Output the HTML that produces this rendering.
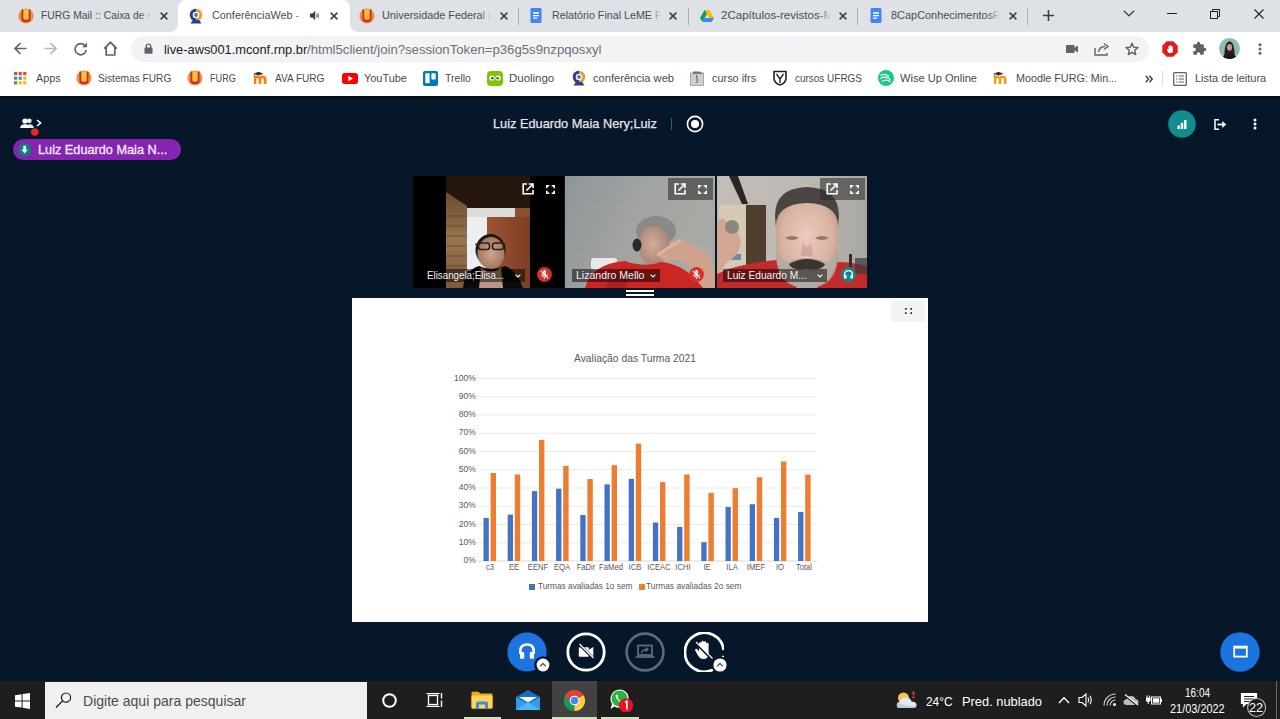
<!DOCTYPE html><html><head><meta charset="utf-8"><style>
*{box-sizing:border-box;margin:0;padding:0}
html,body{width:1280px;height:719px;overflow:hidden;background:#06172a;font-family:"Liberation Sans",sans-serif;position:relative}
.a{position:absolute}
.t{white-space:nowrap;transform-origin:0 0}
</style></head><body>
<div class="a" style="left:0px;top:0px;width:1280px;height:32px;background:#dee1e6"></div>
<div class="a" style="left:178px;top:0px;width:172px;height:32px;background:#fff;border-radius:8px 8px 0 0"></div>
<div class="a" style="left:170px;top:24px;width:8px;height:8px;background:#fff"></div>
<div class="a" style="left:162px;top:16px;width:16px;height:16px;background:#dee1e6;border-radius:0 0 8px 0"></div>
<div class="a" style="left:350px;top:24px;width:8px;height:8px;background:#fff"></div>
<div class="a" style="left:350px;top:16px;width:16px;height:16px;background:#dee1e6;border-radius:0 0 0 8px"></div>
<div class="a" style="left:518px;top:8px;width:1px;height:17px;background:#a9acb0"></div>
<div class="a" style="left:688px;top:8px;width:1px;height:17px;background:#a9acb0"></div>
<div class="a" style="left:857px;top:8px;width:1px;height:17px;background:#a9acb0"></div>
<div class="a" style="left:1027px;top:8px;width:1px;height:17px;background:#a9acb0"></div>
<div class="a t" style="left:41.00px;top:10.42px;font:400 11.5px/1 'Liberation Sans',sans-serif;color:#4a4d51;transform:scaleX(0.8998);">FURG Mail :: Caixa de e</div>
<div class="a" style="left:140px;top:5px;width:14px;height:22px;background:linear-gradient(90deg,rgba(222,225,230,0),#dee1e6 80%)"></div>
<div class="a" style="left:154px;top:5px;width:22px;height:22px;background:#dee1e6"></div>
<div class="a t" style="left:211.80px;top:10.42px;font:400 11.5px/1 'Liberation Sans',sans-serif;color:#4a4d51;transform:scaleX(0.9421);">ConferênciaWeb - L</div>
<div class="a" style="left:294px;top:5px;width:12px;height:22px;background:linear-gradient(90deg,rgba(255,255,255,0),#fff 80%)"></div>
<div class="a" style="left:306px;top:5px;width:22px;height:22px;background:#fff"></div>
<div class="a t" style="left:381.50px;top:10.42px;font:400 11.5px/1 'Liberation Sans',sans-serif;color:#4a4d51;transform:scaleX(0.9423);">Universidade Federal do</div>
<div class="a" style="left:480px;top:5px;width:14px;height:22px;background:linear-gradient(90deg,rgba(222,225,230,0),#dee1e6 80%)"></div>
<div class="a" style="left:494px;top:5px;width:22px;height:22px;background:#dee1e6"></div>
<div class="a t" style="left:551.50px;top:10.42px;font:400 11.5px/1 'Liberation Sans',sans-serif;color:#4a4d51;transform:scaleX(0.9313);">Relatório Final LeME PA</div>
<div class="a" style="left:650px;top:5px;width:14px;height:22px;background:linear-gradient(90deg,rgba(222,225,230,0),#dee1e6 80%)"></div>
<div class="a" style="left:664px;top:5px;width:22px;height:22px;background:#dee1e6"></div>
<div class="a t" style="left:721.30px;top:10.42px;font:400 11.5px/1 'Liberation Sans',sans-serif;color:#4a4d51;transform:scaleX(1.0033);">2Capítulos-revistos-Mar</div>
<div class="a" style="left:819px;top:5px;width:15px;height:22px;background:linear-gradient(90deg,rgba(222,225,230,0),#dee1e6 80%)"></div>
<div class="a" style="left:834px;top:5px;width:22px;height:22px;background:#dee1e6"></div>
<div class="a t" style="left:891.00px;top:10.42px;font:400 11.5px/1 'Liberation Sans',sans-serif;color:#4a4d51;transform:scaleX(0.9507);">8CapConhecimentosRev</div>
<div class="a" style="left:988px;top:5px;width:15px;height:22px;background:linear-gradient(90deg,rgba(222,225,230,0),#dee1e6 80%)"></div>
<div class="a" style="left:1003px;top:5px;width:22px;height:22px;background:#dee1e6"></div>
<svg class="a" style="left:160.2px;top:12.4px;" width="8" height="8" viewBox="0 0 8 8"><path d="M0.6 0.6L7.4 7.4M7.4 0.6L0.6 7.4" stroke="#3c4043" stroke-width="1.5"/></svg>
<svg class="a" style="left:330.2px;top:12.4px;" width="8" height="8" viewBox="0 0 8 8"><path d="M0.6 0.6L7.4 7.4M7.4 0.6L0.6 7.4" stroke="#3c4043" stroke-width="1.5"/></svg>
<svg class="a" style="left:500.2px;top:12.4px;" width="8" height="8" viewBox="0 0 8 8"><path d="M0.6 0.6L7.4 7.4M7.4 0.6L0.6 7.4" stroke="#3c4043" stroke-width="1.5"/></svg>
<svg class="a" style="left:669.2px;top:12.4px;" width="8" height="8" viewBox="0 0 8 8"><path d="M0.6 0.6L7.4 7.4M7.4 0.6L0.6 7.4" stroke="#3c4043" stroke-width="1.5"/></svg>
<svg class="a" style="left:839.2px;top:12.4px;" width="8" height="8" viewBox="0 0 8 8"><path d="M0.6 0.6L7.4 7.4M7.4 0.6L0.6 7.4" stroke="#3c4043" stroke-width="1.5"/></svg>
<svg class="a" style="left:1009.2px;top:12.4px;" width="8" height="8" viewBox="0 0 8 8"><path d="M0.6 0.6L7.4 7.4M7.4 0.6L0.6 7.4" stroke="#3c4043" stroke-width="1.5"/></svg>
<svg class="a" style="left:309px;top:10px;" width="12" height="11" viewBox="0 0 12 11"><path d="M1 3.6H3.4L6.2 0.8V10.2L3.4 7.4H1Z" fill="#3c4043"/><path d="M7.8 3.6Q8.6 5.5 7.8 7.4" stroke="#3c4043" stroke-width="1.1" fill="none"/><path d="M9.3 2.6Q10.5 5.5 9.3 8.4" stroke="#3c4043" stroke-width="0.9" fill="none" opacity="0.6"/></svg>
<svg class="a" style="left:18px;top:8px;" width="16" height="16" viewBox="0 0 16 16"><circle cx="8" cy="8" r="7.6" fill="#f0903c"/><path d="M3.6 1.5V11Q3.6 13.6 8 13.6Q12.4 13.6 12.4 11V1.5Z" fill="#f7c232"/><path d="M3.4 1.5V11.2Q3.4 14 8 14Q12.6 14 12.6 11.2V1.5H10.7V10.6Q10.7 11.8 8 11.8Q5.3 11.8 5.3 10.6V1.5Z" fill="#c8283e"/></svg>
<svg class="a" style="left:359px;top:8px;" width="16" height="16" viewBox="0 0 16 16"><circle cx="8" cy="8" r="7.6" fill="#f0903c"/><path d="M3.6 1.5V11Q3.6 13.6 8 13.6Q12.4 13.6 12.4 11V1.5Z" fill="#f7c232"/><path d="M3.4 1.5V11.2Q3.4 14 8 14Q12.6 14 12.6 11.2V1.5H10.7V10.6Q10.7 11.8 8 11.8Q5.3 11.8 5.3 10.6V1.5Z" fill="#c8283e"/></svg>
<svg class="a" style="left:188px;top:8px;" width="16" height="16" viewBox="0 0 16 16"><circle cx="8" cy="7" r="6.2" fill="#f39a2b"/><path d="M1.8 7A6.2 6.2 0 0 1 8 0.8V13.2A6.2 6.2 0 0 1 1.8 7Z" fill="#243f8f"/><circle cx="8" cy="7" r="3.3" fill="#fff"/><circle cx="8" cy="7" r="1.9" fill="#4a6fc6"/><path d="M2.5 15.5L4.8 12H11.2L13.5 15.5Z" fill="#243f8f"/></svg>
<svg class="a" style="left:529px;top:8px;" width="14" height="15" viewBox="0 0 14 15"><rect x="1.5" y="0" width="11" height="15" rx="1.5" fill="#4285f4"/><path d="M4 5H10M4 7.6H10M4 10.2H8" stroke="#fff" stroke-width="1.3"/></svg>
<svg class="a" style="left:869px;top:8px;" width="14" height="15" viewBox="0 0 14 15"><rect x="1.5" y="0" width="11" height="15" rx="1.5" fill="#4285f4"/><path d="M4 5H10M4 7.6H10M4 10.2H8" stroke="#fff" stroke-width="1.3"/></svg>
<svg class="a" style="left:700px;top:10px;" width="14" height="12" viewBox="0 0 14 12"><path d="M4.6 0H9.4L14 8H9.2Z" fill="#fbbc04"/><path d="M4.6 0L0 8L2.4 12L7 4Z" fill="#0f9d58"/><path d="M2.4 12H11.6L14 8H4.8Z" fill="#4285f4"/><path d="M7 4L9.4 0L14 8H9.2Z" fill="#ea4335" opacity="0"/></svg>
<svg class="a" style="left:1043px;top:10px;" width="11" height="11" viewBox="0 0 11 11"><path d="M5.5 0V11M0 5.5H11" stroke="#3c4043" stroke-width="1.6"/></svg>
<svg class="a" style="left:1123px;top:9.5px;" width="12" height="7" viewBox="0 0 12 7"><path d="M0.8 0.8L6 5.8L11.2 0.8" stroke="#3c4043" stroke-width="1.2" fill="none"/></svg>
<div class="a" style="left:1167px;top:13px;width:10px;height:1px;background:#202124"></div>
<svg class="a" style="left:1210px;top:8.5px;" width="10" height="10" viewBox="0 0 10 10"><path d="M2.5 2.5V0.5H9.5V7.5H7.5" stroke="#202124" stroke-width="1" fill="none"/><rect x="0.5" y="2.5" width="7" height="7" stroke="#202124" stroke-width="1" fill="none"/></svg>
<svg class="a" style="left:1253.5px;top:8.5px;" width="10" height="10" viewBox="0 0 10 10"><path d="M0.5 0.5L9.5 9.5M9.5 0.5L0.5 9.5" stroke="#202124" stroke-width="1.1"/></svg>
<div class="a" style="left:0px;top:32px;width:1280px;height:32px;background:#fff"></div>
<div class="a" style="left:131px;top:36px;width:1018px;height:26px;background:#f1f3f4;border-radius:13px"></div>
<svg class="a" style="left:14px;top:42px;" width="13" height="13" viewBox="0 0 13 13"><path d="M12.5 6.5H1.5M6.5 1L1 6.5L6.5 12" stroke="#5f6368" stroke-width="1.7" fill="none"/></svg>
<svg class="a" style="left:44px;top:42px;" width="13" height="13" viewBox="0 0 13 13"><path d="M0.5 6.5H11.5M6.5 1L12 6.5L6.5 12" stroke="#b4b8bc" stroke-width="1.7" fill="none"/></svg>
<svg class="a" style="left:74px;top:42px;" width="14" height="14" viewBox="0 0 14 14"><path d="M11.5 4.2A5.6 5.6 0 1 0 12.3 8" stroke="#5f6368" stroke-width="1.7" fill="none"/><path d="M8.2 5.2H13V0.4Z" fill="#5f6368"/></svg>
<svg class="a" style="left:103px;top:41px;" width="15" height="15" viewBox="0 0 15 15"><path d="M1.2 7.6L7.5 1.3L13.8 7.6M3.2 6V14H11.8V6" stroke="#5f6368" stroke-width="1.7" fill="none" stroke-linejoin="miter"/></svg>
<svg class="a" style="left:144px;top:43px;" width="9" height="11" viewBox="0 0 9 11"><path d="M2.3 5V3.3A2.2 2.2 0 0 1 6.7 3.3V5" stroke="#5f6368" stroke-width="1.4" fill="none"/><rect x="0.5" y="4.6" width="8" height="6.2" rx="0.8" fill="#5f6368"/></svg>
<div class="a t" style="left:163.50px;top:42.65px;font:400 13px/1 'Liberation Sans',sans-serif;color:#202124;transform:scaleX(0.9860);">live-aws001.mconf.rnp.br</div>
<div class="a t" style="left:307.00px;top:42.65px;font:400 13px/1 'Liberation Sans',sans-serif;color:#6c7075;transform:scaleX(1.0125);">/html5client/join?sessionToken=p36g5s9nzpqosxyl</div>
<svg class="a" style="left:1066px;top:45px;" width="12" height="8" viewBox="0 0 12 8"><rect x="0" y="0" width="8.5" height="8" rx="0.6" fill="#5f6368"/><path d="M8 3L12 0.5V7.5L8 5Z" fill="#5f6368"/></svg>
<svg class="a" style="left:1094px;top:42px;" width="16" height="14" viewBox="0 0 16 14"><path d="M1 6V13H13V11" stroke="#5f6368" stroke-width="1.4" fill="none"/><path d="M4.5 10Q5.5 4.5 11 4.5" stroke="#5f6368" stroke-width="1.4" fill="none"/><path d="M10 1.5L14 4.5L10 7.5" stroke="#5f6368" stroke-width="1.4" fill="none"/></svg>
<svg class="a" style="left:1125px;top:42px;" width="14" height="14" viewBox="0 0 14 14"><path d="M7 1.2L8.7 5.2L13 5.5L9.7 8.3L10.7 12.6L7 10.3L3.3 12.6L4.3 8.3L1 5.5L5.3 5.2Z" stroke="#5f6368" stroke-width="1.4" fill="none" stroke-linejoin="round"/></svg>
<svg class="a" style="left:1162px;top:41px;" width="16" height="16" viewBox="0 0 16 16"><path d="M4.7 0.3H11.3L15.7 4.7V11.3L11.3 15.7H4.7L0.3 11.3V4.7Z" fill="#e01b1b"/><path transform="translate(8 8) scale(0.82) translate(-7.8 -7.6)" d="M5.6 12.6L4.2 8.6Q3.9 7.6 4.7 7.4Q5.3 7.3 5.6 8L6 8.8V4.4Q6 3.7 6.7 3.7Q7.3 3.7 7.3 4.4V3.6Q7.3 2.9 8 2.9Q8.7 2.9 8.7 3.6V4.1Q8.7 3.4 9.4 3.4Q10.1 3.4 10.1 4.1V5.1Q10.1 4.5 10.7 4.5Q11.4 4.5 11.4 5.2V10Q11.4 12.6 9.2 12.6Z" fill="#fff"/></svg>
<svg class="a" style="left:1192px;top:41px;" width="15" height="15" viewBox="0 0 24 24"><path d="M20.5 11H19V7c0-1.1-.9-2-2-2h-4V3.5C13 2.12 11.88 1 10.5 1S8 2.12 8 3.5V5H4c-1.1 0-1.99.9-1.99 2v3.8H3.5c1.49 0 2.7 1.21 2.7 2.7s-1.21 2.7-2.7 2.7H2V20c0 1.1.9 2 2 2h3.8v-1.5c0-1.49 1.21-2.7 2.7-2.7 1.49 0 2.7 1.21 2.7 2.7V22H17c1.1 0 2-.9 2-2v-4h1.5c1.38 0 2.5-1.12 2.5-2.5S21.88 11 20.5 11z" fill="#5f6368"/></svg>
<svg class="a" style="left:1219px;top:38px;" width="21" height="21" viewBox="0 0 21 21"><defs><clipPath id="av"><circle cx="10.5" cy="10.5" r="10.5"/></clipPath></defs><g clip-path="url(#av)"><rect width="21" height="21" fill="#8fbcb8"/><path d="M5.5 21Q5 13 6.5 8Q7.5 3.5 10.5 3.5Q13.5 3.5 14.5 8Q16 13 15.5 21Z" fill="#2c1f1c"/><ellipse cx="10.5" cy="9.3" rx="2.6" ry="3.4" fill="#c89a86"/><path d="M3 21Q4.5 15.5 10.5 15.5Q16.5 15.5 18 21Z" fill="#1c1a1c"/></g></svg>
<svg class="a" style="left:1258px;top:43px;" width="4" height="12" viewBox="0 0 4 12"><circle cx="2" cy="1.7" r="1.5" fill="#5f6368"/><circle cx="2" cy="6" r="1.5" fill="#5f6368"/><circle cx="2" cy="10.3" r="1.5" fill="#5f6368"/></svg>
<div class="a" style="left:0px;top:64px;width:1280px;height:32px;background:#fff"></div>
<div class="a t" style="left:35.50px;top:73.32px;font:400 11.5px/1 'Liberation Sans',sans-serif;color:#474a4f;transform:scaleX(0.9423);">Apps</div>
<div class="a t" style="left:98.30px;top:73.32px;font:400 11.5px/1 'Liberation Sans',sans-serif;color:#474a4f;transform:scaleX(0.8824);">Sistemas FURG</div>
<div class="a t" style="left:210.10px;top:73.32px;font:400 11.5px/1 'Liberation Sans',sans-serif;color:#474a4f;transform:scaleX(0.7919);">FURG</div>
<div class="a t" style="left:274.90px;top:73.32px;font:400 11.5px/1 'Liberation Sans',sans-serif;color:#474a4f;transform:scaleX(0.8760);">AVA FURG</div>
<div class="a t" style="left:364.20px;top:73.32px;font:400 11.5px/1 'Liberation Sans',sans-serif;color:#474a4f;transform:scaleX(0.9471);">YouTube</div>
<div class="a t" style="left:445.10px;top:73.32px;font:400 11.5px/1 'Liberation Sans',sans-serif;color:#474a4f;transform:scaleX(0.9143);">Trello</div>
<div class="a t" style="left:509.30px;top:73.32px;font:400 11.5px/1 'Liberation Sans',sans-serif;color:#474a4f;transform:scaleX(0.9957);">Duolingo</div>
<div class="a t" style="left:592.50px;top:73.32px;font:400 11.5px/1 'Liberation Sans',sans-serif;color:#474a4f;transform:scaleX(0.9672);">conferência web</div>
<div class="a t" style="left:711.90px;top:73.32px;font:400 11.5px/1 'Liberation Sans',sans-serif;color:#474a4f;transform:scaleX(0.9476);">curso ifrs</div>
<div class="a t" style="left:794.50px;top:73.32px;font:400 11.5px/1 'Liberation Sans',sans-serif;color:#474a4f;transform:scaleX(0.8666);">cursos UFRGS</div>
<div class="a t" style="left:899.50px;top:73.32px;font:400 11.5px/1 'Liberation Sans',sans-serif;color:#474a4f;transform:scaleX(0.9639);">Wise Up Online</div>
<div class="a t" style="left:1015.90px;top:73.32px;font:400 11.5px/1 'Liberation Sans',sans-serif;color:#474a4f;transform:scaleX(0.9361);">Moodle FURG: Min...</div>
<div class="a t" style="left:1194.90px;top:73.32px;font:400 11.5px/1 'Liberation Sans',sans-serif;color:#474a4f;transform:scaleX(0.9506);">Lista de leitura</div>
<svg class="a" style="left:14px;top:72px;" width="13" height="13" viewBox="0 0 13 13"><rect x="0.0" y="0.0" width="3.2" height="3.2" fill="#ea4335"/><rect x="4.6" y="0.0" width="3.2" height="3.2" fill="#ea4335"/><rect x="9.2" y="0.0" width="3.2" height="3.2" fill="#ea4335"/><rect x="0.0" y="4.6" width="3.2" height="3.2" fill="#34a853"/><rect x="4.6" y="4.6" width="3.2" height="3.2" fill="#4285f4"/><rect x="9.2" y="4.6" width="3.2" height="3.2" fill="#fbbc04"/><rect x="0.0" y="9.2" width="3.2" height="3.2" fill="#34a853"/><rect x="4.6" y="9.2" width="3.2" height="3.2" fill="#fbbc04"/><rect x="9.2" y="9.2" width="3.2" height="3.2" fill="#fbbc04"/></svg>
<svg class="a" style="left:76px;top:70px;" width="16" height="16" viewBox="0 0 16 16"><circle cx="8" cy="8" r="7.6" fill="#f0903c"/><path d="M3.6 1.5V11Q3.6 13.6 8 13.6Q12.4 13.6 12.4 11V1.5Z" fill="#f7c232"/><path d="M3.4 1.5V11.2Q3.4 14 8 14Q12.6 14 12.6 11.2V1.5H10.7V10.6Q10.7 11.8 8 11.8Q5.3 11.8 5.3 10.6V1.5Z" fill="#c8283e"/></svg>
<svg class="a" style="left:187px;top:70px;" width="16" height="16" viewBox="0 0 16 16"><circle cx="8" cy="8" r="7.6" fill="#f0903c"/><path d="M3.6 1.5V11Q3.6 13.6 8 13.6Q12.4 13.6 12.4 11V1.5Z" fill="#f7c232"/><path d="M3.4 1.5V11.2Q3.4 14 8 14Q12.6 14 12.6 11.2V1.5H10.7V10.6Q10.7 11.8 8 11.8Q5.3 11.8 5.3 10.6V1.5Z" fill="#c8283e"/></svg>
<svg class="a" style="left:253px;top:71px;" width="15" height="14" viewBox="0 0 15 14"><path d="M1 6.5Q1 4.5 3.5 4.5Q5.5 4.5 6.3 5.7Q7.2 4.5 9.3 4.5Q13.5 4.5 13.5 8V13H10.8V8.5Q10.8 7 9.6 7Q8.3 7 8.3 8.5V13H5.6V8.5Q5.6 7 4.4 7Q3.4 7 3.4 8.5V13H1Z" fill="#f98012"/><path d="M0.5 2.8L5.5 0.8L10.5 2.8L5.5 4.6Z" fill="#333"/><path d="M1.2 3V6" stroke="#333" stroke-width="0.7"/></svg>
<svg class="a" style="left:993px;top:71px;" width="15" height="14" viewBox="0 0 15 14"><path d="M1 6.5Q1 4.5 3.5 4.5Q5.5 4.5 6.3 5.7Q7.2 4.5 9.3 4.5Q13.5 4.5 13.5 8V13H10.8V8.5Q10.8 7 9.6 7Q8.3 7 8.3 8.5V13H5.6V8.5Q5.6 7 4.4 7Q3.4 7 3.4 8.5V13H1Z" fill="#e8a022"/><path d="M0.5 2.8L5.5 0.8L10.5 2.8L5.5 4.6Z" fill="#333"/><path d="M1.2 3V6" stroke="#333" stroke-width="0.7"/></svg>
<svg class="a" style="left:341.5px;top:73px;" width="16" height="11" viewBox="0 0 16 11"><rect width="16" height="11" rx="2.8" fill="#f00"/><path d="M6.3 2.8L11 5.5L6.3 8.2Z" fill="#fff"/></svg>
<svg class="a" style="left:422.5px;top:71px;" width="15" height="15" viewBox="0 0 15 15"><rect width="15" height="15" rx="2" fill="#0079bf"/><rect x="2.3" y="2.3" width="4.3" height="10" rx="0.7" fill="#fff"/><rect x="8.4" y="2.3" width="4.3" height="6.2" rx="0.7" fill="#fff"/></svg>
<svg class="a" style="left:487px;top:71px;" width="16" height="15" viewBox="0 0 16 15"><rect width="16" height="15" rx="4" fill="#78c800"/><circle cx="5" cy="7" r="2.6" fill="#fff"/><circle cx="11" cy="7" r="2.6" fill="#fff"/><circle cx="5.4" cy="7.3" r="1.3" fill="#4b4b4b"/><circle cx="10.6" cy="7.3" r="1.3" fill="#4b4b4b"/><path d="M6.5 11.5H9.5L8 13Z" fill="#f5a500"/></svg>
<svg class="a" style="left:571px;top:70px;" width="16" height="16" viewBox="0 0 16 16"><circle cx="8" cy="7" r="6.2" fill="#f39a2b"/><path d="M1.8 7A6.2 6.2 0 0 1 8 0.8V13.2A6.2 6.2 0 0 1 1.8 7Z" fill="#243f8f"/><circle cx="8" cy="7" r="3.3" fill="#fff"/><circle cx="8" cy="7" r="1.9" fill="#4a6fc6"/><path d="M2.5 15.5L4.8 12H11.2L13.5 15.5Z" fill="#243f8f"/></svg>
<svg class="a" style="left:690px;top:70px;" width="15" height="16" viewBox="0 0 15 16"><rect x="0.5" y="3" width="13" height="12.5" fill="#cfcfcf" stroke="#9a9a9a" stroke-width="0.8"/><path d="M3 1.5L10 1.5L13.5 4L3 4Z" fill="#777"/><path d="M6.5 5L7.5 11L6 13" stroke="#555" stroke-width="1" fill="none"/></svg>
<svg class="a" style="left:773px;top:70px;" width="14" height="16" viewBox="0 0 14 16"><path d="M1 1.5H13V8Q13 13 7 15Q1 13 1 8Z" stroke="#222" stroke-width="1.6" fill="none"/><path d="M3.5 4L7 9L10.5 4M7 9V13" stroke="#222" stroke-width="1.4" fill="none"/></svg>
<svg class="a" style="left:878px;top:70px;" width="16" height="16" viewBox="0 0 16 16"><circle cx="8" cy="8" r="8" fill="#18c98a"/><path d="M2.5 5.5Q6 3 11 6.5M2.5 8.5Q6.5 5.5 12.5 9.5M4 11.5Q8 8.5 13 12" stroke="#fff" stroke-width="1.2" fill="none"/></svg>
<svg class="a" style="left:1144.5px;top:74.5px;" width="8" height="8" viewBox="0 0 8 8"><path d="M0.8 0.8L3.6 4L0.8 7.2M4.4 0.8L7.2 4L4.4 7.2" stroke="#3c4043" stroke-width="1.4" fill="none"/></svg>
<div class="a" style="left:1162px;top:71px;width:1px;height:15px;background:#dadce0"></div>
<svg class="a" style="left:1173px;top:72px;" width="14" height="14" viewBox="0 0 14 14"><rect x="0.7" y="0.7" width="12.6" height="12.6" rx="1" stroke="#5f6368" stroke-width="1.3" fill="none"/><path d="M3 4H4.3M3 7H4.3M3 10H4.3M5.7 4H11M5.7 7H11M5.7 10H11" stroke="#5f6368" stroke-width="1.2"/></svg>
<div class="a" style="left:0px;top:96px;width:1280px;height:585px;background:#06172a"></div>
<div class="a" style="left:0px;top:96px;width:1280px;height:1.5px;background:#020c18"></div>
<svg class="a" style="left:20px;top:117.5px;" width="14" height="10" viewBox="0 0 14 10"><circle cx="9.3" cy="2.8" r="2.4" fill="#e8eaed"/><path d="M8 6.2Q13.8 5.8 13.8 10H9.5Q9.5 7.6 8 6.2Z" fill="#e8eaed"/><circle cx="5" cy="3" r="2.6" fill="#fff"/><path d="M0.2 10Q0.2 6.2 5 6.2Q9.8 6.2 9.8 10Z" fill="#fff"/></svg>
<svg class="a" style="left:36px;top:118.5px;" width="6" height="8" viewBox="0 0 6 8"><path d="M1 1L4.6 4L1 7" stroke="#fff" stroke-width="1.6" fill="none"/></svg>
<svg class="a" style="left:31px;top:128px;" width="8" height="8" viewBox="0 0 8 8"><circle cx="3.8" cy="4" r="3.8" fill="#e02a2a"/></svg>
<div class="a" style="left:13.4px;top:139.4px;width:167.3px;height:20.6px;background:#8524b0;border-radius:10.3px"></div>
<svg class="a" style="left:18px;top:143px;" width="14" height="14" viewBox="0 0 14 14"><circle cx="6.6" cy="6.7" r="6.4" fill="#0f7f7e"/><path d="M5.3 2.8H7.9V6.6H9.9L6.6 10.4L3.3 6.6H5.3Z" fill="#e8fbff"/></svg>
<div class="a t" style="left:38.20px;top:142.58px;font:400 13.2px/1 'Liberation Sans',sans-serif;color:#f6ecff;transform:scaleX(0.9639);-webkit-text-stroke:0.3px #f6ecff;">Luiz Eduardo Maia N...</div>
<div class="a t" style="left:492.80px;top:116.51px;font:400 13.4px/1 'Liberation Sans',sans-serif;color:#e3e6ea;transform:scaleX(0.9527);-webkit-text-stroke:0.25px #e3e6ea;">Luiz Eduardo Maia Nery;Luiz</div>
<div class="a" style="left:671px;top:118px;width:1px;height:11.5px;background:#4a5563"></div>
<svg class="a" style="left:685.5px;top:114.5px;" width="18" height="18" viewBox="0 0 18 18"><circle cx="9" cy="9" r="7.6" stroke="#fff" stroke-width="1.6" fill="none"/><circle cx="9" cy="9" r="4.1" fill="#fff"/></svg>
<svg class="a" style="left:1168px;top:109.5px;" width="28" height="28" viewBox="0 0 28 28"><circle cx="14" cy="14" r="13.8" fill="#108d8c"/><rect x="9.5" y="15.5" width="2.4" height="3.5" fill="#fff"/><rect x="12.8" y="12.8" width="2.4" height="6.2" fill="#fff"/><rect x="16.1" y="10" width="2.4" height="9" fill="#fff"/></svg>
<svg class="a" style="left:1213.5px;top:118.5px;" width="13" height="11" viewBox="0 0 13 11"><path d="M5 0.8H1V10.2H5" stroke="#fff" stroke-width="1.5" fill="none"/><path d="M3.5 5.5H9" stroke="#fff" stroke-width="1.8"/><path d="M8.3 2L12.3 5.5L8.3 9Z" fill="#fff"/></svg>
<svg class="a" style="left:1252.5px;top:117.5px;" width="4" height="12" viewBox="0 0 4 12"><circle cx="2" cy="1.9" r="1.5" fill="#fff"/><circle cx="2" cy="6" r="1.5" fill="#fff"/><circle cx="2" cy="10.1" r="1.5" fill="#fff"/></svg>
<svg class="a" style="left:413px;top:176px;" width="151" height="112" viewBox="0 0 151 112"><defs><clipPath id="c1"><rect x="33" y="0" width="84" height="112"/></clipPath>
<linearGradient id="blind" x1="0" y1="0" x2="0" y2="1"><stop offset="0" stop-color="#6a4a30"/><stop offset="0.5" stop-color="#9a7650"/><stop offset="1" stop-color="#7a5a3c"/></linearGradient>
<linearGradient id="door" x1="0" y1="0" x2="1" y2="0"><stop offset="0" stop-color="#9e5434"/><stop offset="1" stop-color="#7c3e24"/></linearGradient>
<radialGradient id="face1" cx="0.5" cy="0.5" r="0.6"><stop offset="0" stop-color="#d0a68e"/><stop offset="1" stop-color="#9a705a"/></radialGradient>
</defs>
<rect width="151" height="112" fill="#000"/>
<g clip-path="url(#c1)">
<rect x="33" y="0" width="84" height="112" fill="#2a1a10"/>
<rect x="33" y="0" width="84" height="31" fill="#24160c"/>
<path d="M33 16L54 30V112H33Z" fill="url(#blind)"/>
<path d="M33 40H54M33 50H54M33 60H54M33 70H54M33 80H54M33 90H54" stroke="#5a3c24" stroke-width="1.2" opacity="0.6"/>
<rect x="54" y="32" width="48" height="9" fill="#dadcd8"/>
<rect x="54" y="41" width="20" height="54" fill="#eceff2"/>
<rect x="74" y="41" width="43" height="71" fill="url(#door)"/>
<rect x="102" y="32" width="15" height="9" fill="#8a5030"/>
<ellipse cx="77.5" cy="74" rx="15" ry="16" fill="#1e1612"/>
<ellipse cx="78" cy="77" rx="13.5" ry="16" fill="url(#face1)"/>
<rect x="65.5" y="67" width="11" height="6.5" rx="2.5" stroke="#2a2220" stroke-width="1.6" fill="none"/><rect x="79.5" y="67" width="11" height="6.5" rx="2.5" stroke="#2a2220" stroke-width="1.6" fill="none"/><path d="M62 68L65.5 69M90.5 69L93 68" stroke="#2a2220" stroke-width="1.2"/>
<path d="M50 112Q52 94 66 90Q78 96 92 90Q104 94 110 112Z" fill="#0c0a0a"/>
<path d="M68 92Q78 99 88 92L90 112H66Z" fill="#b89684"/><path d="M72 100Q78 104 84 100" stroke="#6a5040" stroke-width="0.8" fill="none"/>
</g>
</svg>
<svg class="a" style="left:565px;top:176px;" width="150" height="112" viewBox="0 0 150 112"><defs>
<linearGradient id="wall2" x1="0" y1="0" x2="1" y2="0.3"><stop offset="0" stop-color="#8f9598"/><stop offset="0.55" stop-color="#a3a4a2"/><stop offset="1" stop-color="#a9a9a5"/></linearGradient>
<radialGradient id="face2" cx="0.45" cy="0.45" r="0.6"><stop offset="0" stop-color="#d2ae9c"/><stop offset="1" stop-color="#a88070"/></radialGradient>
</defs>
<rect width="150" height="112" fill="url(#wall2)"/>
<rect x="26" y="82" width="26" height="12" rx="3" fill="#e6e8ea"/>
<ellipse cx="91" cy="55" rx="20" ry="15" fill="#8c8a88"/>
<ellipse cx="89" cy="70" rx="15" ry="20" fill="url(#face2)"/>
<ellipse cx="72" cy="69" rx="4.5" ry="6.5" fill="#2a2a2c"/>
<path d="M93 80L108 65Q114 62 122 66Q136 72 144 80Q150 90 150 112H132Q130 96 120 86Q112 82 100 86Z" fill="#cfa28e"/><path d="M92 79L116 64" stroke="#dcb4a0" stroke-width="3"/>
<path d="M20 112Q26 88 60 85Q80 92 96 86Q120 88 138 112Z" fill="#cc2624"/>
<path d="M40 112Q50 94 70 92L60 112Z" fill="#a01a1a" opacity="0.6"/>
</svg>
<svg class="a" style="left:717px;top:176px;" width="150" height="112" viewBox="0 0 150 112"><defs>
<linearGradient id="wall3" x1="0" y1="0" x2="1" y2="0"><stop offset="0" stop-color="#c2beb6"/><stop offset="0.6" stop-color="#bcb9b3"/><stop offset="1" stop-color="#a9a7a2"/></linearGradient>
<radialGradient id="face3" cx="0.5" cy="0.4" r="0.6"><stop offset="0" stop-color="#eacbbd"/><stop offset="0.7" stop-color="#d8b2a0"/><stop offset="1" stop-color="#b89282"/></radialGradient>
</defs>
<rect width="150" height="112" fill="url(#wall3)"/>
<path d="M12 0H21L31 28H25Z" fill="#2a2624"/>
<rect x="29" y="29" width="20" height="83" fill="#4e3e30"/>
<rect x="2" y="29" width="27" height="63" fill="#d6cab2"/>
<rect x="14" y="78" width="10" height="6" fill="#6a8ab8"/>
<path d="M0 45Q6 40 10 46Q20 50 24 66Q22 80 10 86L0 100Z" fill="#d4a696"/>
<circle cx="15" cy="51" r="7" fill="#8a8680"/>
<path d="M0 112V98Q20 88 60 84L80 112Z" fill="#c22a2c"/>
<path d="M150 112V90Q135 86 120 86L100 112Z" fill="#c22a2c"/>
<path d="M58 40Q58 12 90 11Q122 12 122 40L121 52H59Z" fill="#4a4442"/>
<path d="M59 50Q59 28 90 27Q121 28 121 50V78Q121 112 90 112Q59 112 59 78Z" fill="url(#face3)"/>
<path d="M68 62Q75 58 82 62Q75 66 68 62Z" fill="#8a6252" opacity="0.8"/><path d="M98 62Q105 58 112 62Q105 66 98 62Z" fill="#8a6252" opacity="0.8"/>
<path d="M86 66Q90 76 94 66L96 80H84Z" fill="#c8988a" opacity="0.6"/>
<path d="M59 66Q59 112 90 112Q121 112 121 66Q119 84 110 86Q100 82 90 82Q80 82 70 86Q61 84 59 66Z" fill="#b4aca4"/>
<path d="M72 88Q90 78 108 88Q106 95 90 93Q74 95 72 88Z" fill="#3c3430"/>
<rect x="132" y="78" width="3" height="22" fill="#2e2e30"/><rect x="138" y="82" width="12" height="16" fill="#3a3a3c" opacity="0.7"/>
</svg>
<div class="a" style="left:715px;top:176px;width:2px;height:112px;background:#06172a"></div>
<div class="a" style="left:668px;top:178px;width:45px;height:22px;background:rgba(40,40,40,0.55)"></div>
<div class="a" style="left:820px;top:178px;width:45px;height:22px;background:rgba(40,40,40,0.55)"></div>
<svg class="a" style="left:521.5px;top:183px;" width="12" height="12" viewBox="0 0 12 12"><path d="M5 1H1.2V10.8H11V7" stroke="#fff" stroke-width="1.6" fill="none"/><path d="M4.5 7.5L10.5 1.5M6.8 1H11V5.2" stroke="#fff" stroke-width="1.6" fill="none"/></svg>
<svg class="a" style="left:545.5px;top:184.5px;" width="9" height="9" viewBox="0 0 9 9"><path d="M0.8 3.3V0.8H3.3M5.7 0.8H8.2V3.3M8.2 5.7V8.2H5.7M3.3 8.2H0.8V5.7" stroke="#fff" stroke-width="1.6" fill="none"/></svg>
<svg class="a" style="left:673.5px;top:183px;" width="12" height="12" viewBox="0 0 12 12"><path d="M5 1H1.2V10.8H11V7" stroke="#fff" stroke-width="1.6" fill="none"/><path d="M4.5 7.5L10.5 1.5M6.8 1H11V5.2" stroke="#fff" stroke-width="1.6" fill="none"/></svg>
<svg class="a" style="left:697.5px;top:184.5px;" width="9" height="9" viewBox="0 0 9 9"><path d="M0.8 3.3V0.8H3.3M5.7 0.8H8.2V3.3M8.2 5.7V8.2H5.7M3.3 8.2H0.8V5.7" stroke="#fff" stroke-width="1.6" fill="none"/></svg>
<svg class="a" style="left:825.5px;top:183px;" width="12" height="12" viewBox="0 0 12 12"><path d="M5 1H1.2V10.8H11V7" stroke="#fff" stroke-width="1.6" fill="none"/><path d="M4.5 7.5L10.5 1.5M6.8 1H11V5.2" stroke="#fff" stroke-width="1.6" fill="none"/></svg>
<svg class="a" style="left:849.5px;top:184.5px;" width="9" height="9" viewBox="0 0 9 9"><path d="M0.8 3.3V0.8H3.3M5.7 0.8H8.2V3.3M8.2 5.7V8.2H5.7M3.3 8.2H0.8V5.7" stroke="#fff" stroke-width="1.6" fill="none"/></svg>
<div class="a" style="left:423px;top:269px;width:102px;height:13.4px;background:rgba(0,0,0,0.5)"></div>
<div class="a t" style="left:426.50px;top:270.38px;font:400 10.5px/1 'Liberation Sans',sans-serif;color:#f2f2f2;transform:scaleX(0.9291);">Elisangela;Elisa...</div>
<svg class="a" style="left:515px;top:274px;" width="6" height="4" viewBox="0 0 6 4"><path d="M0.6 0.6L3 3L5.4 0.6" stroke="#fff" stroke-width="1.1" fill="none"/></svg>
<div class="a" style="left:572px;top:269px;width:87.5px;height:13.4px;background:rgba(0,0,0,0.5)"></div>
<div class="a t" style="left:575.50px;top:270.38px;font:400 10.5px/1 'Liberation Sans',sans-serif;color:#f2f2f2;transform:scaleX(1.0017);">Lizandro Mello</div>
<svg class="a" style="left:649.5px;top:274px;" width="6" height="4" viewBox="0 0 6 4"><path d="M0.6 0.6L3 3L5.4 0.6" stroke="#fff" stroke-width="1.1" fill="none"/></svg>
<div class="a" style="left:723px;top:269px;width:103.8px;height:13.4px;background:rgba(0,0,0,0.5)"></div>
<div class="a t" style="left:726.50px;top:270.38px;font:400 10.5px/1 'Liberation Sans',sans-serif;color:#f2f2f2;transform:scaleX(0.9673);">Luiz Eduardo M...</div>
<svg class="a" style="left:816.8px;top:274px;" width="6" height="4" viewBox="0 0 6 4"><path d="M0.6 0.6L3 3L5.4 0.6" stroke="#fff" stroke-width="1.1" fill="none"/></svg>
<svg class="a" style="left:537.2px;top:267px;" width="15" height="15" viewBox="0 0 15 15"><circle cx="7.5" cy="7.5" r="7.4" fill="#d9302c"/><path d="M6 4.2Q6 3 7.5 3Q9 3 9 4.2V7.5Q9 8.8 7.5 8.8Q6 8.8 6 7.5Z" fill="#fff"/><path d="M4.6 7.2Q4.8 10.2 7.5 10.2Q10.2 10.2 10.4 7.2M7.5 10.2V12" stroke="#fff" stroke-width="1" fill="none"/><path d="M3.8 3.8L11.2 11.2" stroke="#fff" stroke-width="1.2"/><path d="M3.8 3.8L11.2 11.2" stroke="#d9302c" stroke-width="0.5" transform="translate(0.9,-0.9)"/></svg>
<svg class="a" style="left:689.2px;top:267px;" width="15" height="15" viewBox="0 0 15 15"><circle cx="7.5" cy="7.5" r="7.4" fill="#d9302c"/><path d="M6 4.2Q6 3 7.5 3Q9 3 9 4.2V7.5Q9 8.8 7.5 8.8Q6 8.8 6 7.5Z" fill="#fff"/><path d="M4.6 7.2Q4.8 10.2 7.5 10.2Q10.2 10.2 10.4 7.2M7.5 10.2V12" stroke="#fff" stroke-width="1" fill="none"/><path d="M3.8 3.8L11.2 11.2" stroke="#fff" stroke-width="1.2"/><path d="M3.8 3.8L11.2 11.2" stroke="#d9302c" stroke-width="0.5" transform="translate(0.9,-0.9)"/></svg>
<svg class="a" style="left:841px;top:267px;" width="15" height="15" viewBox="0 0 15 15"><circle cx="7.5" cy="7.5" r="7.4" fill="#118585"/><path d="M3.6 10V7.6Q3.6 3.6 7.5 3.6Q11.4 3.6 11.4 7.6V10" stroke="#fff" stroke-width="1.4" fill="none"/><rect x="3" y="8" width="2.6" height="3.6" rx="0.6" fill="#fff"/><rect x="9.4" y="8" width="2.6" height="3.6" rx="0.6" fill="#fff"/></svg>
<div class="a" style="left:626px;top:290px;width:28px;height:1.6px;background:#fff"></div>
<div class="a" style="left:626px;top:294px;width:28px;height:1.6px;background:#fff"></div>
<svg class="a" style="left:506.5px;top:631.5px;" width="40" height="40" viewBox="0 0 40 40"><circle cx="20" cy="20" r="19.6" fill="#1b74e0"/><path d="M13.3 22V19Q13.3 12.5 20 12.5Q26.7 12.5 26.7 19V22" stroke="#fff" stroke-width="2.6" fill="none"/><rect x="13" y="20" width="4.2" height="6.8" rx="1" fill="#fff"/><rect x="22.8" y="20" width="4.2" height="6.8" rx="1" fill="#fff"/></svg>
<svg class="a" style="left:533.5px;top:655.5px;" width="18" height="18" viewBox="0 0 18 18"><circle cx="9" cy="9" r="8.8" fill="#06172a"/><circle cx="9" cy="9" r="6.4" fill="#fff"/><path d="M6.2 10.3L9 7.5L11.8 10.3" stroke="#555" stroke-width="1.3" fill="none"/></svg>
<svg class="a" style="left:565.5px;top:631.5px;" width="40" height="40" viewBox="0 0 40 40"><circle cx="20" cy="20" r="18.2" stroke="#fff" stroke-width="2.8" fill="#06172a"/><rect x="12.8" y="15.2" width="10" height="9.5" rx="0.8" fill="#fff"/><path d="M22.5 18L27.3 15V24.8L22.5 21.8Z" fill="#fff"/><path d="M13 12L27 26" stroke="#06172a" stroke-width="2.6"/><path d="M13.5 12L27.5 26" stroke="#fff" stroke-width="1.2"/></svg>
<svg class="a" style="left:624.5px;top:631.5px;" width="40" height="40" viewBox="0 0 40 40"><circle cx="20" cy="20" r="18.4" stroke="#5c6a7a" stroke-width="2.6" fill="#06172a"/><rect x="13" y="13.5" width="14" height="9.5" stroke="#5c6a7a" stroke-width="1.8" fill="none"/><path d="M10.5 25H29.5" stroke="#5c6a7a" stroke-width="1.8"/><path d="M16.5 21Q17.5 17.5 22 17.5M20.5 15.5L23 17.5L20.5 19.5" stroke="#5c6a7a" stroke-width="1.4" fill="none"/></svg>
<svg class="a" style="left:683.5px;top:631.5px;" width="40" height="40" viewBox="0 0 40 40"><path d="M39.4 23.8A19.4 19.4 0 1 1 39.6 18" stroke="#fff" stroke-width="2.8" fill="none" transform="rotate(0 20 20)"/><path d="M15 17V11.5Q15 10.3 16.2 10.3Q17.4 10.3 17.4 11.5V16V10Q17.4 8.8 18.6 8.8Q19.8 8.8 19.8 10V16V10.5Q19.8 9.3 21 9.3Q22.2 9.3 22.2 10.5V16.5V12Q22.2 10.8 23.4 10.8Q24.6 10.8 24.6 12V21Q24.6 27 19.5 27Q16 27 14 23.5L11.2 18.5Q10.7 17.3 11.7 16.9Q12.7 16.5 13.5 17.6L15 19.5Z" fill="#fff"/><path d="M11 10.5L28 27.5" stroke="#06172a" stroke-width="2.2"/><path d="M12 10L28.5 26.5" stroke="#fff" stroke-width="1.1"/></svg>
<svg class="a" style="left:710.5px;top:655.5px;" width="18" height="18" viewBox="0 0 18 18"><circle cx="9" cy="9" r="8.8" fill="#06172a"/><circle cx="9" cy="9" r="6.6" fill="#fff"/><path d="M6.2 10.3L9 7.5L11.8 10.3" stroke="#555" stroke-width="1.3" fill="none"/></svg>
<svg class="a" style="left:1219.5px;top:631.5px;" width="40" height="40" viewBox="0 0 40 40"><circle cx="20" cy="20" r="19.7" fill="#1b74e0"/><rect x="14.2" y="14.6" width="12.6" height="10" stroke="#fff" stroke-width="1.8" fill="none"/><rect x="14" y="14" width="13" height="2.6" fill="#fff"/></svg>
<div class="a" style="left:352px;top:298px;width:576px;height:324px;background:#fff"></div>
<div class="a" style="left:890.8px;top:300.8px;width:34.7px;height:21.2px;background:#f1f3f5"></div>
<svg class="a" style="left:905px;top:308px;" width="7" height="6" viewBox="0 0 7 6"><path d="M0.6 2V0.6H2M5 0.6H6.4V2M6.4 4V5.4H5M2 5.4H0.6V4" stroke="#444" stroke-width="1.2" fill="none"/></svg>
<div class="a t" style="left:574.00px;top:353.50px;font:400 10px/1 'Liberation Sans',sans-serif;color:#595959;transform:scaleX(1.0321);">Avaliação das Turma 2021</div>
<svg class="a" style="left:0;top:0" width="1280" height="719" viewBox="0 0 1280 719"><rect x="477.6" y="542.25" width="339" height="1" fill="#ebebeb"/><rect x="477.6" y="523.99" width="339" height="1" fill="#ebebeb"/><rect x="477.6" y="505.74" width="339" height="1" fill="#ebebeb"/><rect x="477.6" y="487.48" width="339" height="1" fill="#ebebeb"/><rect x="477.6" y="469.23" width="339" height="1" fill="#ebebeb"/><rect x="477.6" y="450.97" width="339" height="1" fill="#ebebeb"/><rect x="477.6" y="432.72" width="339" height="1" fill="#ebebeb"/><rect x="477.6" y="414.46" width="339" height="1" fill="#ebebeb"/><rect x="477.6" y="396.21" width="339" height="1" fill="#ebebeb"/><rect x="477.6" y="377.95" width="339" height="1" fill="#ebebeb"/><rect x="477.6" y="560.50" width="339" height="1" fill="#d9d9d9"/><rect x="483.50" y="517.92" width="5.3" height="43.08" fill="#4472c4"/><rect x="490.60" y="473.01" width="5.4" height="87.99" fill="#ed7d31"/><rect x="507.70" y="514.63" width="5.3" height="46.37" fill="#4472c4"/><rect x="514.80" y="474.47" width="5.4" height="86.53" fill="#ed7d31"/><rect x="531.90" y="491.08" width="5.3" height="69.92" fill="#4472c4"/><rect x="539.00" y="439.97" width="5.4" height="121.03" fill="#ed7d31"/><rect x="556.10" y="488.71" width="5.3" height="72.29" fill="#4472c4"/><rect x="563.20" y="465.89" width="5.4" height="95.11" fill="#ed7d31"/><rect x="580.30" y="515.00" width="5.3" height="46.00" fill="#4472c4"/><rect x="587.40" y="479.04" width="5.4" height="81.96" fill="#ed7d31"/><rect x="604.50" y="484.33" width="5.3" height="76.67" fill="#4472c4"/><rect x="611.60" y="465.16" width="5.4" height="95.84" fill="#ed7d31"/><rect x="628.70" y="478.85" width="5.3" height="82.15" fill="#4472c4"/><rect x="635.80" y="443.62" width="5.4" height="117.38" fill="#ed7d31"/><rect x="652.90" y="522.48" width="5.3" height="38.52" fill="#4472c4"/><rect x="660.00" y="482.14" width="5.4" height="78.86" fill="#ed7d31"/><rect x="677.10" y="526.86" width="5.3" height="34.14" fill="#4472c4"/><rect x="684.20" y="474.47" width="5.4" height="86.53" fill="#ed7d31"/><rect x="701.30" y="542.20" width="5.3" height="18.80" fill="#4472c4"/><rect x="708.40" y="492.91" width="5.4" height="68.09" fill="#ed7d31"/><rect x="725.50" y="506.97" width="5.3" height="54.03" fill="#4472c4"/><rect x="732.60" y="488.16" width="5.4" height="72.84" fill="#ed7d31"/><rect x="749.70" y="504.23" width="5.3" height="56.77" fill="#4472c4"/><rect x="756.80" y="477.21" width="5.4" height="83.79" fill="#ed7d31"/><rect x="773.90" y="517.92" width="5.3" height="43.08" fill="#4472c4"/><rect x="781.00" y="461.51" width="5.4" height="99.49" fill="#ed7d31"/><rect x="798.10" y="511.89" width="5.3" height="49.11" fill="#4472c4"/><rect x="805.20" y="474.47" width="5.4" height="86.53" fill="#ed7d31"/></svg>
<div class="a t" style="left:0;top:556.10px;width:475.9px;text-align:right;font:8.6px/1 'Liberation Sans',sans-serif;color:#595959">0%</div>
<div class="a t" style="left:0;top:537.85px;width:475.9px;text-align:right;font:8.6px/1 'Liberation Sans',sans-serif;color:#595959">10%</div>
<div class="a t" style="left:0;top:519.59px;width:475.9px;text-align:right;font:8.6px/1 'Liberation Sans',sans-serif;color:#595959">20%</div>
<div class="a t" style="left:0;top:501.34px;width:475.9px;text-align:right;font:8.6px/1 'Liberation Sans',sans-serif;color:#595959">30%</div>
<div class="a t" style="left:0;top:483.08px;width:475.9px;text-align:right;font:8.6px/1 'Liberation Sans',sans-serif;color:#595959">40%</div>
<div class="a t" style="left:0;top:464.83px;width:475.9px;text-align:right;font:8.6px/1 'Liberation Sans',sans-serif;color:#595959">50%</div>
<div class="a t" style="left:0;top:446.57px;width:475.9px;text-align:right;font:8.6px/1 'Liberation Sans',sans-serif;color:#595959">60%</div>
<div class="a t" style="left:0;top:428.32px;width:475.9px;text-align:right;font:8.6px/1 'Liberation Sans',sans-serif;color:#595959">70%</div>
<div class="a t" style="left:0;top:410.06px;width:475.9px;text-align:right;font:8.6px/1 'Liberation Sans',sans-serif;color:#595959">80%</div>
<div class="a t" style="left:0;top:391.81px;width:475.9px;text-align:right;font:8.6px/1 'Liberation Sans',sans-serif;color:#595959">90%</div>
<div class="a t" style="left:0;top:373.55px;width:475.9px;text-align:right;font:8.6px/1 'Liberation Sans',sans-serif;color:#595959">100%</div>
<div class="a t" style="left:459.65px;top:563.40px;width:60px;text-align:center;font:8.7px/1 'Liberation Sans',sans-serif;color:#595959;transform:scaleX(0.88);transform-origin:50% 0">c3</div>
<div class="a t" style="left:483.85px;top:563.40px;width:60px;text-align:center;font:8.7px/1 'Liberation Sans',sans-serif;color:#595959;transform:scaleX(0.88);transform-origin:50% 0">EE</div>
<div class="a t" style="left:508.05px;top:563.40px;width:60px;text-align:center;font:8.7px/1 'Liberation Sans',sans-serif;color:#595959;transform:scaleX(0.88);transform-origin:50% 0">EENF</div>
<div class="a t" style="left:532.25px;top:563.40px;width:60px;text-align:center;font:8.7px/1 'Liberation Sans',sans-serif;color:#595959;transform:scaleX(0.88);transform-origin:50% 0">EQA</div>
<div class="a t" style="left:556.45px;top:563.40px;width:60px;text-align:center;font:8.7px/1 'Liberation Sans',sans-serif;color:#595959;transform:scaleX(0.88);transform-origin:50% 0">FaDir</div>
<div class="a t" style="left:580.65px;top:563.40px;width:60px;text-align:center;font:8.7px/1 'Liberation Sans',sans-serif;color:#595959;transform:scaleX(0.88);transform-origin:50% 0">FaMed</div>
<div class="a t" style="left:604.85px;top:563.40px;width:60px;text-align:center;font:8.7px/1 'Liberation Sans',sans-serif;color:#595959;transform:scaleX(0.88);transform-origin:50% 0">ICB</div>
<div class="a t" style="left:629.05px;top:563.40px;width:60px;text-align:center;font:8.7px/1 'Liberation Sans',sans-serif;color:#595959;transform:scaleX(0.88);transform-origin:50% 0">ICEAC</div>
<div class="a t" style="left:653.25px;top:563.40px;width:60px;text-align:center;font:8.7px/1 'Liberation Sans',sans-serif;color:#595959;transform:scaleX(0.88);transform-origin:50% 0">ICHI</div>
<div class="a t" style="left:677.45px;top:563.40px;width:60px;text-align:center;font:8.7px/1 'Liberation Sans',sans-serif;color:#595959;transform:scaleX(0.88);transform-origin:50% 0">IE</div>
<div class="a t" style="left:701.65px;top:563.40px;width:60px;text-align:center;font:8.7px/1 'Liberation Sans',sans-serif;color:#595959;transform:scaleX(0.88);transform-origin:50% 0">ILA</div>
<div class="a t" style="left:725.85px;top:563.40px;width:60px;text-align:center;font:8.7px/1 'Liberation Sans',sans-serif;color:#595959;transform:scaleX(0.88);transform-origin:50% 0">IMEF</div>
<div class="a t" style="left:750.05px;top:563.40px;width:60px;text-align:center;font:8.7px/1 'Liberation Sans',sans-serif;color:#595959;transform:scaleX(0.88);transform-origin:50% 0">IO</div>
<div class="a t" style="left:774.25px;top:563.40px;width:60px;text-align:center;font:8.7px/1 'Liberation Sans',sans-serif;color:#595959;transform:scaleX(0.88);transform-origin:50% 0">Total</div>
<div class="a" style="left:528.8px;top:584.4px;width:6px;height:5.5px;background:#4472c4"></div>
<div class="a t" style="left:537.50px;top:582.45px;font:400 9px/1 'Liberation Sans',sans-serif;color:#595959;transform:scaleX(0.9191);">Turmas avaliadas 1o sem</div>
<div class="a" style="left:639.3px;top:584.4px;width:6px;height:5.5px;background:#ed7d31"></div>
<div class="a t" style="left:646.40px;top:582.45px;font:400 9px/1 'Liberation Sans',sans-serif;color:#595959;transform:scaleX(0.9298);">Turmas avaliadas 2o sem</div>
<div class="a" style="left:0px;top:681px;width:1280px;height:38px;background:#1e1e1e"></div>
<div class="a" style="left:45px;top:681.5px;width:322px;height:37.5px;background:#f0f0f0"></div>
<svg class="a" style="left:15px;top:692.5px;" width="15" height="16" viewBox="0 0 15 16"><path d="M0 2.2L6.6 1.3V7.4H0Z M7.6 1.1L15 0V7.4H7.6Z M0 8.4H6.6V14.6L0 13.7Z M7.6 8.4H15V16L7.6 14.8Z" fill="#fff"/></svg>
<svg class="a" style="left:55px;top:692px;" width="16" height="17" viewBox="0 0 16 17"><circle cx="11" cy="5.6" r="4.6" stroke="#1a1a1a" stroke-width="1.2" fill="none"/><path d="M7.7 8.9L1 15.5" stroke="#1a1a1a" stroke-width="1.3"/></svg>
<div class="a t" style="left:83.20px;top:694.00px;font:400 14px/1 'Liberation Sans',sans-serif;color:#4c4c4c;transform:scaleX(1.0021);">Digite aqui para pesquisar</div>
<svg class="a" style="left:382px;top:692.5px;" width="15" height="15" viewBox="0 0 15 15"><circle cx="7.5" cy="7.5" r="6.3" stroke="#fff" stroke-width="2" fill="none"/></svg>
<svg class="a" style="left:426px;top:693px;" width="17" height="14" viewBox="0 0 17 14"><rect x="2.5" y="2.5" width="9" height="9" stroke="#fff" stroke-width="1.3" fill="none"/><path d="M0.5 0.7H13.5M0.5 13.3H13.5" stroke="#fff" stroke-width="1.3"/><path d="M15.5 0V5.5M15.5 7.5V14" stroke="#fff" stroke-width="1.4"/></svg>
<svg class="a" style="left:471px;top:691px;" width="22" height="18" viewBox="0 0 22 18"><path d="M0.5 2Q0.5 0.8 1.7 0.8H7.3L9.3 2.6H20.3Q21.5 2.6 21.5 3.8V16.3Q21.5 17.5 20.3 17.5H1.7Q0.5 17.5 0.5 16.3Z" fill="#e8a822"/><rect x="0.5" y="4.6" width="21" height="12.9" rx="1" fill="#ffd25a"/><path d="M5 17.5V12.5Q5 10.5 7 10.5H15Q17 10.5 17 12.5V17.5H14V13.5H8V17.5Z" fill="#3a8ed6"/></svg>
<div class="a" style="left:463.75px;top:717px;width:37.5px;height:2px;background:#cfe2b8"></div>
<svg class="a" style="left:516px;top:690px;" width="24" height="20" viewBox="0 0 24 20"><path d="M0 7L12 0L24 7V20H0Z" fill="#1a6fc4"/><path d="M0 7L12 14L24 7V20H0Z" fill="#2f9bea"/><path d="M3 7L12 12.5L21 7Z" fill="#f4f8fc"/><path d="M0 20L12 12L24 20Z" fill="#55b6f7"/></svg>
<div class="a" style="left:552px;top:681px;width:45px;height:38px;background:#424242"></div>
<div class="a" style="left:552px;top:717px;width:45px;height:2px;background:#cfe2b8"></div>
<svg class="a" style="left:563.5px;top:689.5px;" width="21" height="21" viewBox="0 0 21 21"><circle cx="10.5" cy="10.5" r="10.5" fill="#db4437"/><path d="M10.5 10.5L1.4 5.25A10.5 10.5 0 0 0 10.5 21Z" fill="#0f9d58"/><path d="M10.5 10.5L10.5 21A10.5 10.5 0 0 0 19.6 5.25Z" fill="#ffcd40"/><path d="M10.5 5.25H19.6A10.5 10.5 0 0 0 1.4 5.25L5.95 13.13Z" fill="#db4437"/><circle cx="10.5" cy="10.5" r="4.8" fill="#fff"/><circle cx="10.5" cy="10.5" r="3.8" fill="#4285f4"/></svg>
<svg class="a" style="left:608px;top:688px;" width="26" height="24" viewBox="0 0 26 24"><path d="M2.5 21L4 16Q2 13 2.5 9.5Q4 2 11.5 1.5Q19 1.5 20.5 9Q21.5 17 13.5 19.5Q9.5 20.5 6.5 18.5Z" fill="#fff"/><circle cx="11.5" cy="10.5" r="8" fill="#29b43e"/><path d="M8 6.5Q7 8 8.5 10.5Q10.5 13.5 13.5 14.5Q15 14.8 15.5 13.5L14 12.5L13 13.2Q11 12.5 9.7 10L10.3 9L9.5 7Z" fill="#fff"/><circle cx="18" cy="17.5" r="7.2" fill="#e81123"/><path d="M17 14.5L18.8 13.3V21.5" stroke="#fff" stroke-width="1.6" fill="none"/></svg>
<div class="a" style="left:601px;top:717px;width:37.8px;height:2px;background:#cfe2b8"></div>
<svg class="a" style="left:896px;top:691px;" width="22" height="18" viewBox="0 0 22 18"><circle cx="7.5" cy="7" r="5.5" fill="#f7c948"/><path d="M4 17Q0.5 17 0.8 13.8Q1.2 10.8 4.2 10.8Q5.2 6.5 10 6.5Q14.5 6.5 15.5 10.5Q20.5 10.5 20.5 14Q20.5 17 17 17Z" fill="#dfe9f4"/><path d="M4 17Q0.5 17 0.8 13.8Q1.2 12 3 11.2Q6 15 17 15Q20 15 20.5 14Q20.5 17 17 17Z" fill="#b8cde0"/><path d="M17.5 0.5V4.2" stroke="#e84040" stroke-width="1.8"/><circle cx="17.5" cy="6.3" r="1.1" fill="#e84040"/></svg>
<div class="a t" style="left:926.00px;top:694.82px;font:400 13.5px/1 'Liberation Sans',sans-serif;color:#fff;transform:scaleX(0.8785);">24°C</div>
<div class="a t" style="left:962.00px;top:694.82px;font:400 13.5px/1 'Liberation Sans',sans-serif;color:#fff;transform:scaleX(0.9516);">Pred. nublado</div>
<svg class="a" style="left:1057.5px;top:696px;" width="12" height="8" viewBox="0 0 12 8"><path d="M1 7L6 1.8L11 7" stroke="#fff" stroke-width="1.4" fill="none"/></svg>
<svg class="a" style="left:1078px;top:692px;" width="16" height="16" viewBox="0 0 16 16"><path d="M1 5.5H4L8 2V14L4 10.5H1Z" stroke="#fff" stroke-width="1.1" fill="none"/><path d="M10 5.5Q11.5 8 10 10.5M12 3.8Q14.4 8 12 12.2" stroke="#fff" stroke-width="1.1" fill="none"/></svg>
<svg class="a" style="left:1103px;top:693px;" width="13" height="14" viewBox="0 0 13 14"><path d="M1 12.5A11.5 11.5 0 0 1 12.5 1M4 12.5A8.5 8.5 0 0 1 12.5 4M7 12.5A5.5 5.5 0 0 1 12.5 7" stroke="#d8d8d8" stroke-width="1.1" fill="none"/><circle cx="11.5" cy="11.5" r="1.5" fill="#fff"/></svg>
<svg class="a" style="left:1123px;top:694px;" width="16" height="12" viewBox="0 0 16 12"><path d="M3.5 11Q0.5 11 0.5 8.3Q0.5 5.8 3.3 5.6Q4.3 2 8 2Q11.6 2 12.5 5.3Q15.5 5.5 15.5 8.3Q15.5 11 12.5 11Z" fill="#bdbdbd"/><path d="M1.5 1L14.5 11.5" stroke="#1e1e1e" stroke-width="2"/><path d="M2 0.5L15 11" stroke="#fff" stroke-width="1.1"/></svg>
<svg class="a" style="left:1145.5px;top:694px;" width="16" height="12" viewBox="0 0 16 12"><path d="M1 3.5V1.5M3.5 3.5V1.5" stroke="#fff" stroke-width="1.1"/><path d="M0 3.5H4.5V6.5Q4.5 8 2.2 8Q0 8 0 6.5Z" fill="#fff"/><path d="M2.2 8V10" stroke="#fff" stroke-width="1"/><rect x="5.5" y="3" width="9" height="7" stroke="#fff" stroke-width="1" fill="none"/><rect x="6.8" y="4.3" width="6.5" height="4.4" fill="#fff"/><rect x="14.5" y="5" width="1.5" height="3" fill="#fff"/></svg>
<div class="a t" style="left:1184.70px;top:686.60px;font:400 12px/1 'Liberation Sans',sans-serif;color:#fff;transform:scaleX(0.8325);">16:04</div>
<div class="a t" style="left:1170.00px;top:703.10px;font:400 12px/1 'Liberation Sans',sans-serif;color:#fff;transform:scaleX(0.9108);">21/03/2022</div>
<svg class="a" style="left:1240px;top:692px;" width="28" height="26" viewBox="0 0 28 26"><path d="M1.5 1.5H16.5V11.5H6L3.5 14V11.5H1.5Z" stroke="#fff" stroke-width="1.2" fill="#fff"/><path d="M4 4.5H14M4 7H14M4 9.5H11" stroke="#1e1e1e" stroke-width="1"/><circle cx="16.6" cy="15.5" r="9" fill="#1e1e1e" stroke="#bbb" stroke-width="1.1"/></svg>
<div class="a t" style="left:1249.30px;top:701.80px;font:400 12px/1 'Liberation Sans',sans-serif;color:#fff;transform:scaleX(1.0639);">22</div>
<div class="a" style="left:1276px;top:681px;width:1px;height:38px;background:#6a6a6a"></div>
</body></html>
